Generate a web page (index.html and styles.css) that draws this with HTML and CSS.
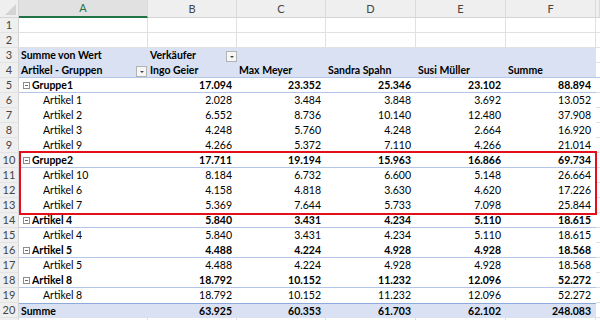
FILE: index.html
```html
<!DOCTYPE html>
<html>
<head>
<meta charset="utf-8">
<link rel="stylesheet" href="styles.css">
</head>
<body>
<div class="sheet">
  <div class="hdr">
    <div class="corner"><svg width="19" height="18" viewBox="0 0 19 18"><polygon points="16,4 16,15 5,15" fill="#d4d4d4"/></svg></div>
    <div class="colh sel">A</div>
    <div class="colh">B</div>
    <div class="colh">C</div>
    <div class="colh">D</div>
    <div class="colh">E</div>
    <div class="colh">F</div>
    <div class="colh"></div>
  </div>

  <div class="row grid"><div class="rh">1</div><div class="c"></div><div class="c"></div><div class="c"></div><div class="c"></div><div class="c"></div><div class="c"></div><div class="c"></div></div>
  <div class="row grid"><div class="rh">2</div><div class="c"></div><div class="c"></div><div class="c"></div><div class="c"></div><div class="c"></div><div class="c"></div><div class="c"></div></div>

  <div class="row ph"><div class="rh">3</div><div class="c">Summe von Wert</div><div class="c hasdd flush"><span>Verkäufer</span><span class="dd"></span></div><div class="c"></div><div class="c"></div><div class="c"></div><div class="c"></div><div class="c g"></div></div>
  <div class="row ph ph2"><div class="rh">4</div><div class="c hasdd"><span>Artikel - Gruppen</span><span class="dd"></span></div><div class="c">Ingo Geier</div><div class="c">Max Meyer</div><div class="c">Sandra Spahn</div><div class="c">Susi Müller</div><div class="c">Summe</div><div class="c g"></div></div>

  <div class="row pv grp"><div class="rh">5</div><div class="c glabel"><span class="minus"></span>Gruppe1</div><div class="c num">17.094</div><div class="c num">23.352</div><div class="c num">25.346</div><div class="c num">23.102</div><div class="c num">88.894</div><div class="c g"></div></div>
  <div class="row pv"><div class="rh">6</div><div class="c item">Artikel 1</div><div class="c num">2.028</div><div class="c num">3.484</div><div class="c num">3.848</div><div class="c num">3.692</div><div class="c num">13.052</div><div class="c g"></div></div>
  <div class="row pv"><div class="rh">7</div><div class="c item">Artikel 2</div><div class="c num">6.552</div><div class="c num">8.736</div><div class="c num">10.140</div><div class="c num">12.480</div><div class="c num">37.908</div><div class="c g"></div></div>
  <div class="row pv"><div class="rh">8</div><div class="c item">Artikel 3</div><div class="c num">4.248</div><div class="c num">5.760</div><div class="c num">4.248</div><div class="c num">2.664</div><div class="c num">16.920</div><div class="c g"></div></div>
  <div class="row pv"><div class="rh">9</div><div class="c item">Artikel 9</div><div class="c num">4.266</div><div class="c num">5.372</div><div class="c num">7.110</div><div class="c num">4.266</div><div class="c num">21.014</div><div class="c g"></div></div>

  <div class="row pv grp"><div class="rh">10</div><div class="c glabel"><span class="minus"></span>Gruppe2</div><div class="c num">17.711</div><div class="c num">19.194</div><div class="c num">15.963</div><div class="c num">16.866</div><div class="c num">69.734</div><div class="c g"></div></div>
  <div class="row pv"><div class="rh">11</div><div class="c item">Artikel 10</div><div class="c num">8.184</div><div class="c num">6.732</div><div class="c num">6.600</div><div class="c num">5.148</div><div class="c num">26.664</div><div class="c g"></div></div>
  <div class="row pv"><div class="rh">12</div><div class="c item">Artikel 6</div><div class="c num">4.158</div><div class="c num">4.818</div><div class="c num">3.630</div><div class="c num">4.620</div><div class="c num">17.226</div><div class="c g"></div></div>
  <div class="row pv"><div class="rh">13</div><div class="c item">Artikel 7</div><div class="c num">5.369</div><div class="c num">7.644</div><div class="c num">5.733</div><div class="c num">7.098</div><div class="c num">25.844</div><div class="c g"></div></div>

  <div class="row pv grp"><div class="rh">14</div><div class="c glabel"><span class="minus"></span>Artikel 4</div><div class="c num">5.840</div><div class="c num">3.431</div><div class="c num">4.234</div><div class="c num">5.110</div><div class="c num">18.615</div><div class="c g"></div></div>
  <div class="row pv"><div class="rh">15</div><div class="c item">Artikel 4</div><div class="c num">5.840</div><div class="c num">3.431</div><div class="c num">4.234</div><div class="c num">5.110</div><div class="c num">18.615</div><div class="c g"></div></div>

  <div class="row pv grp"><div class="rh">16</div><div class="c glabel"><span class="minus"></span>Artikel 5</div><div class="c num">4.488</div><div class="c num">4.224</div><div class="c num">4.928</div><div class="c num">4.928</div><div class="c num">18.568</div><div class="c g"></div></div>
  <div class="row pv"><div class="rh">17</div><div class="c item">Artikel 5</div><div class="c num">4.488</div><div class="c num">4.224</div><div class="c num">4.928</div><div class="c num">4.928</div><div class="c num">18.568</div><div class="c g"></div></div>

  <div class="row pv grp"><div class="rh">18</div><div class="c glabel"><span class="minus"></span>Artikel 8</div><div class="c num">18.792</div><div class="c num">10.152</div><div class="c num">11.232</div><div class="c num">12.096</div><div class="c num">52.272</div><div class="c g"></div></div>
  <div class="row pv"><div class="rh">19</div><div class="c item">Artikel 8</div><div class="c num">18.792</div><div class="c num">10.152</div><div class="c num">11.232</div><div class="c num">12.096</div><div class="c num">52.272</div><div class="c g"></div></div>

  <div class="row pv tot"><div class="rh">20</div><div class="c">Summe</div><div class="c num">63.925</div><div class="c num">60.353</div><div class="c num">61.703</div><div class="c num">62.102</div><div class="c num">248.083</div><div class="c g"></div></div>

  <div class="row grid"><div class="rh"></div><div class="c"></div><div class="c"></div><div class="c"></div><div class="c"></div><div class="c"></div><div class="c"></div><div class="c"></div></div>

  <div class="redbox"></div>
</div>
</body>
</html>
```

FILE: styles.css
```css
html, body {
  margin: 0;
  padding: 0;
  background: #ffffff;
}

.sheet {
  position: relative;
  width: 600px;
  height: 320px;
  overflow: hidden;
  font-family: Lato, "Liberation Sans", sans-serif;
  color: #000;
}

.hdr,
.row {
  display: grid;
  grid-template-columns: 19px 129px 89px 89px 90px 90px 90px 4px;
}

.hdr {
  height: 18px;
  background: #efefef;
}

.corner {
  background: #efefef;
  border-right: 1px solid #d4d4d4;
  border-bottom: 1px solid #d4d4d4;
  box-sizing: border-box;
  overflow: hidden;
}

.corner svg {
  display: block;
}

.colh {
  box-sizing: border-box;
  border-right: 1px solid #dadada;
  border-bottom: 1px solid #d4d4d4;
  font-size: 11px;
  line-height: 17px;
  color: #444;
  text-align: center;
}

.colh.sel {
  background: #e1e1e1;
  color: #217346;
  border-bottom: 2px solid #217346;
  line-height: 16px;
}

.row {
  height: 15px;
}

.rh {
  box-sizing: border-box;
  background: #efefef;
  border-right: 1px solid #d4d4d4;
  border-bottom: 1px solid #e3e3e3;
  color: #444;
  font-size: 11px;
  line-height: 14px;
  text-align: center;
}

.c {
  box-sizing: border-box;
  font-size: 10.5px;
  line-height: 15px;
  white-space: nowrap;
  overflow: hidden;
  padding: 0 2px;
}

.grid .c,
.c.g {
  border-right: 1px solid #e1e1e1;
  border-bottom: 1px solid #e1e1e1;
  background: #fff;
  font-weight: 400;
}

.ph .c {
  background: #d9e1f2;
  font-weight: 700;
}

.ph .c.g {
  background: #fff;
}

.ph2 .c {
  border-bottom: 1px solid #b4c6e7;
  line-height: 14px;
}

.hasdd {
  display: flex;
  justify-content: space-between;
  align-items: flex-start;
  padding-right: 1px;
}

.hasdd.flush {
  padding-right: 0;
}

.dd {
  position: relative;
  width: 11px;
  height: 11px;
  margin-top: 3px;
  box-sizing: border-box;
  border: 1px solid #b3b3b3;
  background: #f6f6f6;
  flex: none;
}

.dd::after {
  content: "";
  position: absolute;
  left: 3px;
  top: 4px;
  border-left: 2px solid transparent;
  border-right: 2px solid transparent;
  border-top: 2px solid #444;
}

.grp .c {
  font-weight: 700;
  border-bottom: 1px solid #b4c6e7;
  line-height: 14px;
}

.grp .c.g {
  border-bottom: 1px solid #e1e1e1;
}

.glabel {
  display: flex;
  align-items: center;
  padding-left: 4px;
  gap: 2px;
}

.minus {
  position: relative;
  width: 7px;
  height: 7px;
  box-sizing: border-box;
  border: 1px solid #8c8c8c;
  background: #fff;
  flex: none;
}

.minus::after {
  content: "";
  position: absolute;
  left: 1px;
  right: 1px;
  top: 2px;
  height: 1px;
  background: #6a6a6a;
}

.item {
  padding-left: 24px;
}

.num {
  text-align: right;
  padding-right: 5px;
}

.tot .c {
  background: #d9e1f2;
  font-weight: 700;
  border-top: 1px solid #8ea9db;
  line-height: 14px;
}

.tot .c.g {
  background: #fff;
  border-top: 0;
}

.redbox {
  position: absolute;
  left: 19px;
  top: 151px;
  width: 578px;
  height: 64px;
  box-sizing: border-box;
  border: 2px solid #e3101c;
  pointer-events: none;
}
```
